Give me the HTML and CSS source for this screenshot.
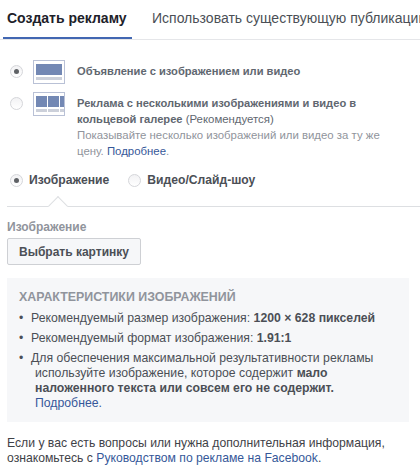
FILE: index.html
```html
<!DOCTYPE html>
<html lang="ru">
<head>
<meta charset="utf-8">
<title>Создать рекламу</title>
<link rel="stylesheet" href="styles.css">
</head>
<body>
<div class="tabs">
  <div class="tab active">Создать рекламу</div>
  <div class="tab">Использовать существующую публикацию</div>
</div>
<div class="formats">
  <div class="format one">
    <span class="radio checked"></span>
    <svg class="thumb" width="32" height="24" viewBox="0 0 32 24"><rect x=".5" y=".5" width="31" height="23" fill="#fff" stroke="#b9c1d6"/><rect x="3" y="4" width="26" height="11" fill="#7388b4"/><rect x="3" y="17" width="26" height="3" fill="#ccd0da"/></svg>
    <div class="ftext"><b>Объявление с изображением или видео</b></div>
  </div>
  <div class="format two">
    <span class="radio"></span>
    <svg class="thumb" width="32" height="24" viewBox="0 0 32 24"><rect x=".5" y=".5" width="31" height="23" fill="#fff" stroke="#b9c1d6"/><rect x="3" y="4" width="11" height="11" fill="#7388b4"/><rect x="15" y="4" width="11" height="11" fill="#7388b4"/><rect x="27" y="4" width="4" height="11" fill="#7388b4"/><rect x="3" y="17" width="11" height="3" fill="#ccd0da"/><rect x="15" y="17" width="11" height="3" fill="#ccd0da"/><rect x="27" y="17" width="4" height="3" fill="#ccd0da"/></svg>
    <div class="ftext"><b>Реклама с несколькими изображениями и видео в кольцевой галерее</b> <span class="rec">(Рекомендуется)</span><br><span class="muted">Показывайте несколько изображений или видео за ту же цену. <a href="#">Подробнее</a>.</span></div>
  </div>
</div>
<div class="media">
  <span class="radio checked"></span><span class="mlabel first">Изображение</span>
  <span class="radio"></span><span class="mlabel">Видео/Слайд-шоу</span>
</div>
<div class="divider"><span class="caret"></span></div>
<div class="label">Изображение</div>
<button class="btn">Выбрать картинку</button>
<div class="specs">
  <h4>Характеристики изображений</h4>
  <ul>
    <li>Рекомендуемый размер изображения: <b>1200 × 628 пикселей</b></li>
    <li>Рекомендуемый формат изображения: <b>1.91:1</b></li>
    <li>Для обеспечения максимальной результативности рекламы используйте изображение, которое содержит <b>мало наложенного текста или совсем его не содержит.</b> <a href="#">Подробнее.</a></li>
  </ul>
</div>
<p class="foot">Если у вас есть вопросы или нужна дополнительная информация, ознакомьтесь с <a href="#">Руководством по рекламе на Facebook</a>.</p>
</body>
</html>
```
FILE: styles.css
```css
* { box-sizing: border-box; }
html, body { margin: 0; padding: 0; }
body {
  width: 420px; height: 471px; overflow: hidden; background: #fff;
  font: 12px/16px "Liberation Sans", Arial, sans-serif; color: #4b4f56;
}
a { color: #365899; text-decoration: none; }
.tabs { display: flex; height: 40px; border-bottom: 1px solid #e5e6e9; padding-left: 3px; white-space: nowrap; overflow: hidden; }
.tab { font-size: 14px; line-height: 37px; padding: 0 4px; height: 40px; margin-right: 14px; color: #4b4f56; flex: none; }
.tab.active { width: 129px; font-weight: bold; color: #1d2129; border-bottom: 3px solid #4267b2; margin-right: 16px; }
.formats { padding-top: 20px; }
.format { display: flex; align-items: flex-start; position: relative; }
.format.one { height: 32px; }
.radio {
  display: inline-block; flex: none; width: 13px; height: 13px; border-radius: 50%;
  background: linear-gradient(#f2f2f4, #fff); border: 1px solid #d5d6da; position: relative;
}
.radio.checked::after {
  content: ""; position: absolute; left: 3px; top: 3px; width: 5px; height: 5px; border-radius: 50%; background: #5f6266;
}
.format .radio { margin: 5px 0 0 10px; }
.thumb { flex: none; margin-left: 10px; display: block; }
.ftext { margin-left: 12px; width: 325px; padding-top: 3px; font-size: 11.4px; }
.ftext b { color: #616770; font-size: 11.15px; }
.rec { color: #616770; }
.muted { color: #90949c; }
.media { display: flex; align-items: center; height: 20px; margin-top: 11px; padding-left: 10px; font-size: 12.15px; font-weight: bold; color: #4b4f56; }
.mlabel { margin-left: 6px; }
.mlabel.first { margin-right: 19px; }
.divider { margin: 16px 0 0 7px; height: 1px; background: #dddfe2; position: relative; }
.caret { position: absolute; left: 44px; top: -7px; width: 14px; height: 14px; background: #fff; border-left: 1px solid #dddfe2; border-top: 1px solid #dddfe2; transform: rotate(45deg); }
.label { margin: 12px 0 0 7px; font-weight: bold; color: #90949c; }
.btn {
  display: block; margin: 3px 0 0 7px; width: 134px; height: 27px; padding: 0;
  font: bold 12px "Liberation Sans", Arial, sans-serif; color: #4b4f56;
  background: #f6f7f9; border: 1px solid #ced0d4; border-radius: 2px;
}
.specs { margin: 13px 0 0 7px; width: 402px; height: 144px; background: #f6f7f9; padding: 11px 0 0 12px; }
.specs h4 { margin: 0; font-size: 12.4px; line-height: 16px; text-transform: uppercase; color: #90949c; font-weight: bold; }
.specs ul { list-style: none; margin: 6px 0 0; padding: 0; }
.specs li { position: relative; padding-left: 16px; text-indent: -4px; margin-bottom: 5px; line-height: 15px; width: 365px; font-size: 12.25px; }
.specs li::before { content: "•"; position: absolute; left: 0; top: 0; text-indent: 0; }
.specs li b { color: #4b4f56; }
.foot { margin: 14px 0 0 7px; line-height: 15px; width: 400px; color: #3f4247; font-size: 12.2px; }
```
